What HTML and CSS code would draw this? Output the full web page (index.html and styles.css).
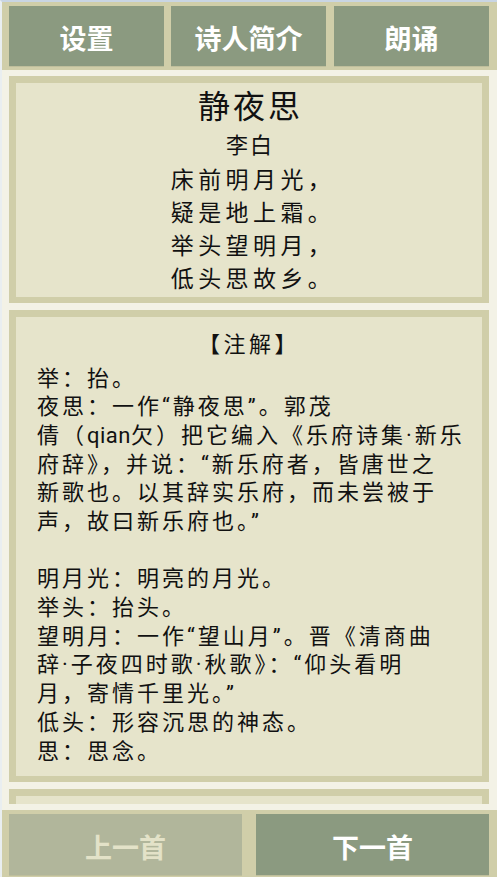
FILE: index.html
```html
<!DOCTYPE html>
<html lang="zh-CN">
<head>
  <meta charset="UTF-8">
  <meta name="viewport" content="width=device-width, initial-scale=1.0">
  <title>静夜思</title>
  <link rel="stylesheet" href="styles.css">
</head>
<body>
  <div class="app">
    <nav class="tabs">
      <button class="tab">设置</button>
      <button class="tab">诗人简介</button>
      <button class="tab">朗诵</button>
    </nav>
    <main class="scroll">
      <section class="card poem">
        <h1 class="poem-title">静夜思</h1>
        <p class="poem-author">李白</p>
        <div class="poem-lines">
          <p>床前明月光，</p>
          <p>疑是地上霜。</p>
          <p>举头望明月，</p>
          <p>低头思故乡。</p>
        </div>
      </section>
      <section class="card notes">
        <h2 class="notes-title">【注解】</h2>
        <div class="notes-body">
          <p>举：抬。</p>
          <p>夜思：一作“静夜思”。郭茂</p>
          <p>倩（<span class="latin">qian</span>欠）把它编入《乐府诗集·新乐</p>
          <p>府辞》，并说：“新乐府者，皆唐世之</p>
          <p>新歌也。以其辞实乐府，而未尝被于</p>
          <p>声，故曰新乐府也。”</p>
          <p class="blank"></p>
          <p>明月光：明亮的月光。</p>
          <p>举头：抬头。</p>
          <p>望明月：一作“望山月”。晋《清商曲</p>
          <p>辞·子夜四时歌·秋歌》：“仰头看明</p>
          <p>月，寄情千里光。”</p>
          <p>低头：形容沉思的神态。</p>
          <p>思：思念。</p>
        </div>
      </section>
      <section class="card more"></section>
    </main>
    <footer class="pager">
      <button class="page-btn" disabled>上一首</button>
      <button class="page-btn">下一首</button>
    </footer>
  </div>
</body>
</html>
```

FILE: styles.css
```css
* {
  box-sizing: border-box;
}
html, body {
  margin: 0;
  padding: 0;
}
body {
  width: 497px;
  height: 877px;
  overflow: hidden;
  background: #f3f2e6;
  border-top: 2px solid #c9d5e3;
  border-left: 2px solid #e9eef0;
  font-family: Roboto, "Noto Sans CJK SC", sans-serif;
  color: #111;
}
.app {
  display: flex;
  flex-direction: column;
  height: 875px;
}
.tabs {
  display: flex;
  gap: 7px;
  height: 68px;
  padding: 4px 8px 4px 7px;
  background: #d0cea9;
}
.tab, .page-btn {
  flex: 1;
  border: 0;
  margin: 0;
  padding: 3px 0 0;
  background: #8b9a80;
  color: #fff;
  font-family: "Noto Sans CJK SC", sans-serif;
  font-size: 27px;
  font-weight: bold;
  box-shadow: 0 1px 0 #bfbf9c;
}
.tabs .tab:nth-child(3) {
  margin-left: 1px;
}
.scroll {
  flex: 1;
  overflow: hidden;
  padding: 6px 8px 0 7px;
  margin-bottom: 6px;
}
.card {
  background: #e6e4cb;
  border: 7px solid #d0cea9;
  border-bottom-width: 6px;
  margin-bottom: 7px;
}
.card p, .card h1, .card h2 {
  margin: 0;
}
.poem {
  text-align: center;
  padding-bottom: 1px;
}
.poem-title {
  margin-top: 4px !important;
  font-size: 32px;
  font-weight: normal;
  line-height: 40px;
  letter-spacing: 3px;
  padding-left: 3px;
}
.poem-author {
  margin-top: 4px !important;
  font-size: 22px;
  line-height: 30px;
  letter-spacing: 2px;
  padding-left: 2px;
}
.poem-lines {
  margin-top: 3px;
}
.poem-lines p {
  font-size: 23px;
  line-height: 33px;
  letter-spacing: 4.4px;
  padding-left: 8px;
}
.notes {
  padding: 11px 0 9.6px 21px;
}
.notes-title {
  font-size: 22px;
  font-weight: normal;
  line-height: 34px;
  letter-spacing: 3.5px;
  text-align: center;
  margin-left: -21px !important;
}
.notes-body {
  margin-top: 2.6px;
}
.notes-body p {
  font-size: 22px;
  line-height: 28.7px;
  height: 28.7px;
  letter-spacing: 3px;
  white-space: nowrap;
}
.notes-body .latin {
  letter-spacing: 0.5px;
}
.more {
  height: 60px;
}
.pager {
  display: flex;
  gap: 14px;
  height: 67px;
  padding: 4px 8px 2px 7px;
  background: #d0cea9;
}
.page-btn:disabled {
  background: #b1b69b;
  color: #e3e2c8;
}
```
